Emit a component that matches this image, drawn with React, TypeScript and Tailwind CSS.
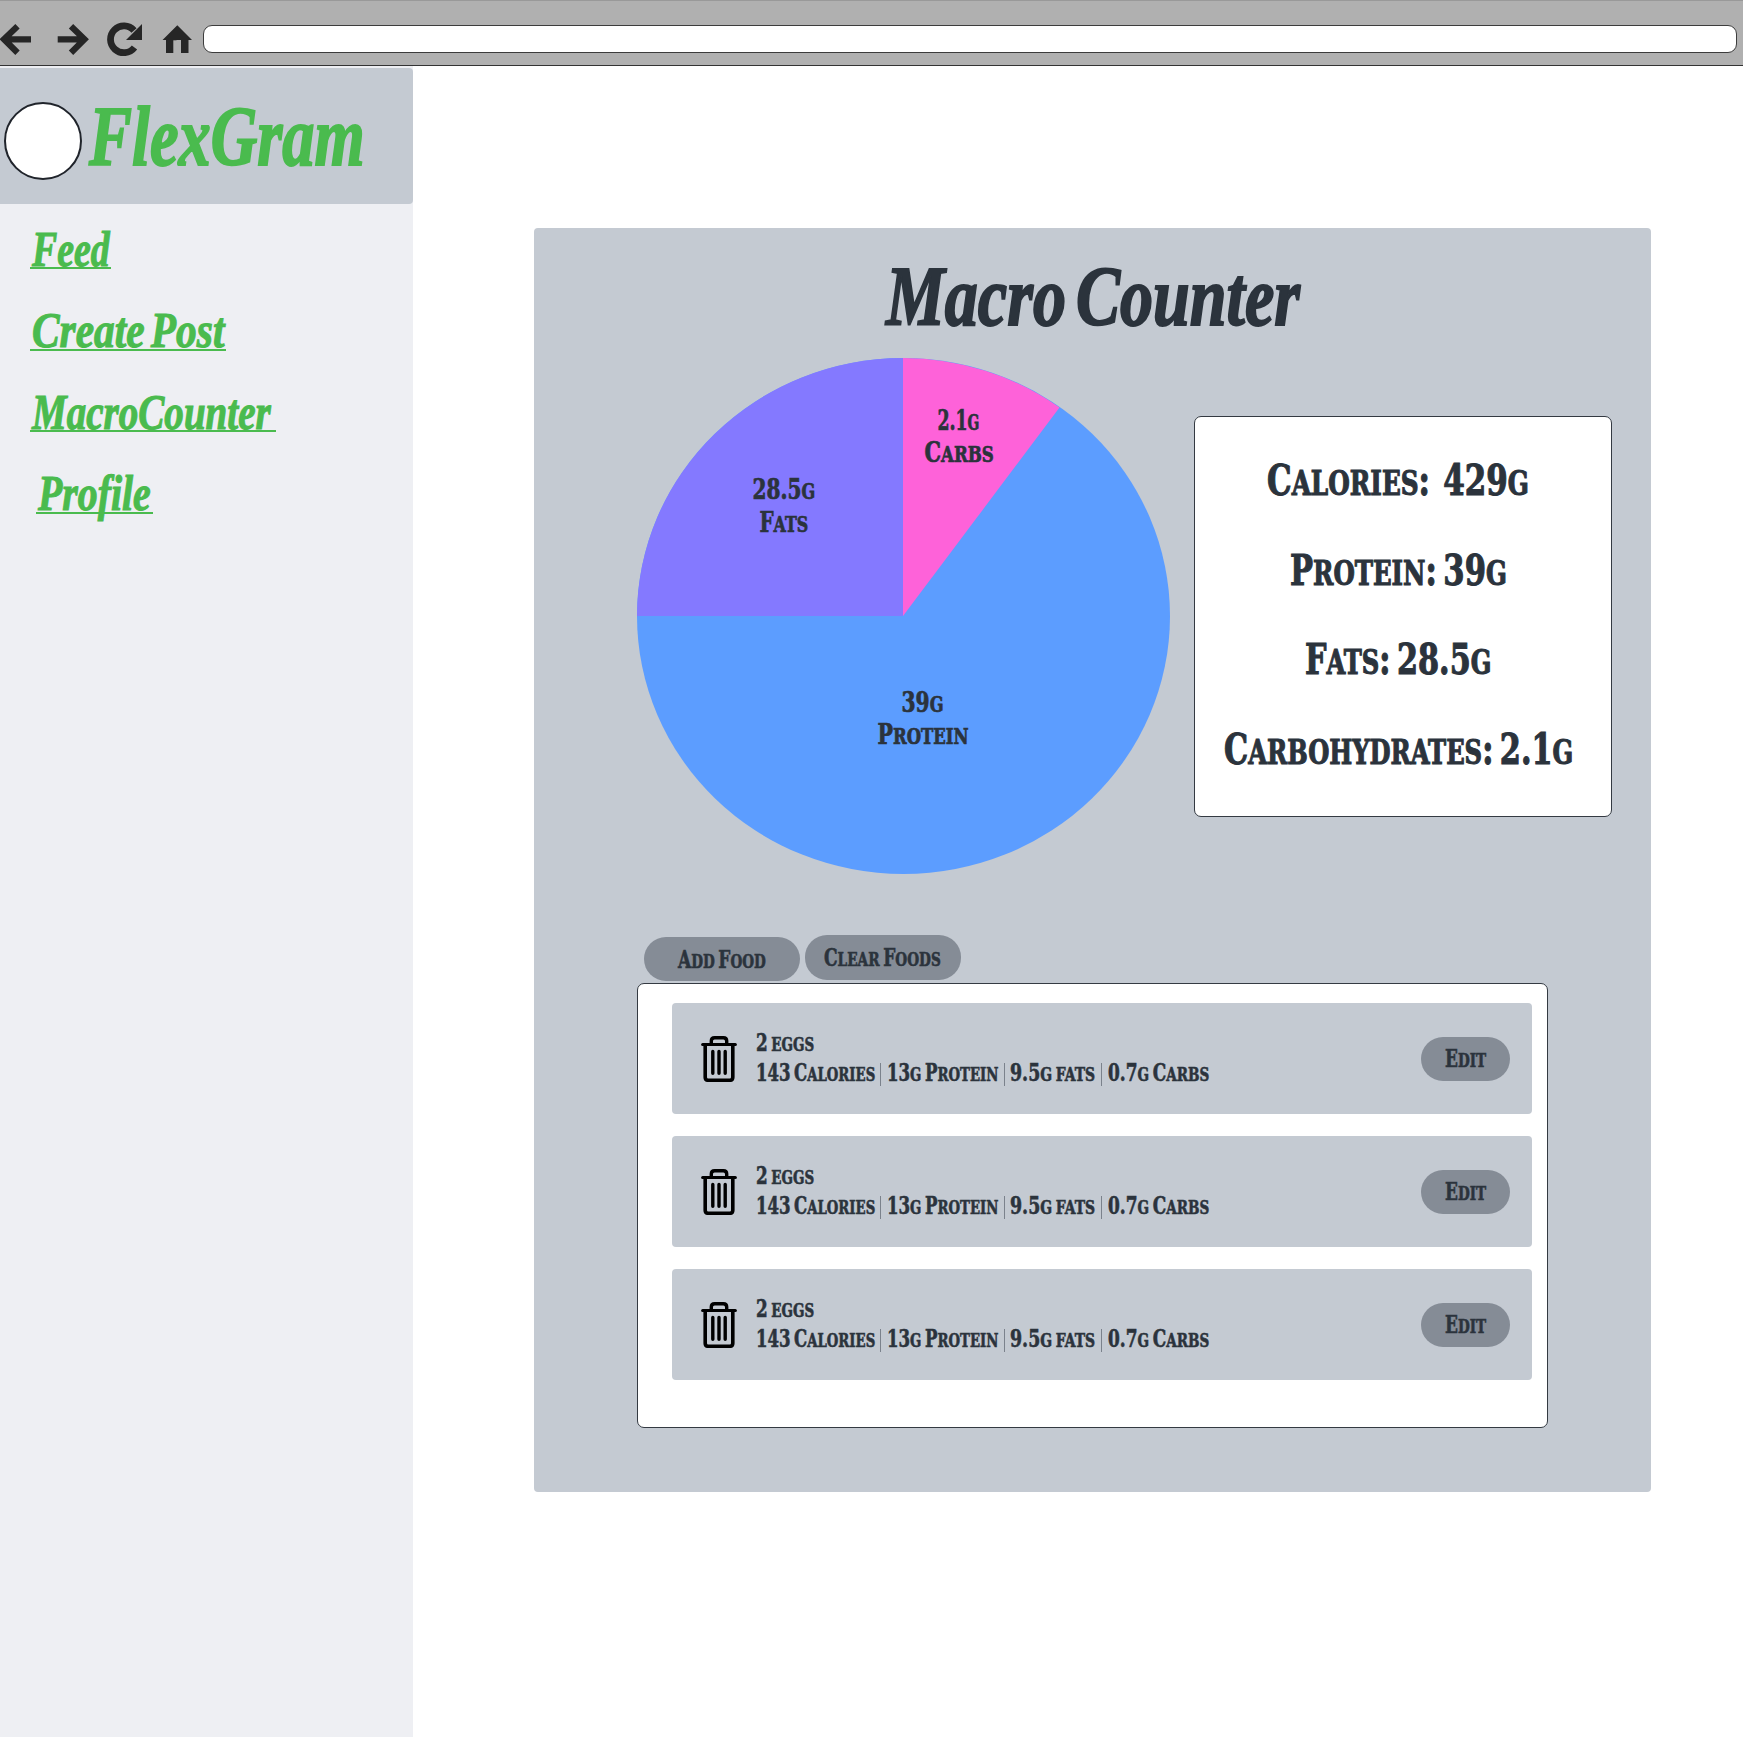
import { useLayoutEffect, useRef, useState } from "react";
import type { ReactNode } from "react";

/** One line of text, condensed or widened horizontally to a given width. */
function FitText({ width, className = "", children }: { width: number; className?: string; children: ReactNode }) {
  const ref = useRef<HTMLSpanElement>(null);
  const [scale, setScale] = useState(1);
  useLayoutEffect(() => {
    if (ref.current) setScale(width / ref.current.offsetWidth);
  }, [width, children]);
  return (
    <span className={`flex items-center justify-start whitespace-pre ${className}`} style={{ width }}>
      <span ref={ref} className="inline-block shrink-0 origin-left leading-none" style={{ transform: `scaleX(${scale})` }}>
        {children}
      </span>
    </span>
  );
}

/** Slab lettering whose lower-case letters are drawn as small capitals. */
function Slab({ text, width, className = "" }: { text: string; width: number; className?: string }) {
  const runs = text.match(/[a-z]+|[^a-z]+/g) ?? [];
  return (
    <FitText
      width={width}
      className={`font-['DejaVu_Serif_Condensed','DejaVu_Serif',serif] font-bold text-[#2b333c] [word-spacing:-0.12em] [-webkit-text-stroke:0.025em_#2b333c] ${className}`}
    >
      {runs.map((run, i) =>
        /[a-z]/.test(run) ? (
          <span key={i} className="text-[0.8em] uppercase">{run}</span>
        ) : (
          <span key={i}>{run}</span>
        ),
      )}
    </FitText>
  );
}

const script = "font-['Liberation_Serif',serif] font-bold italic [word-spacing:-0.1em]";

function BrowserBar() {
  return (
    <header className="flex h-[66px] w-full shrink-0 items-start border-t border-b border-t-[#999] border-b-[#333] bg-[#b0b0b0]">
      <svg className="mt-[21px] h-[36px] w-[203px] shrink-0" viewBox="0 22 203 36" fill="none" stroke="#262626">
        <path d="M31 39.3H4M17.5 26.3 4 39.3l13.5 13.5" strokeWidth="6.2" />
        <path d="M57.7 39.3H85M71 26.3l13.5 13-13.5 13.5" strokeWidth="6.2" />
        <path d="M134.5 47.5A13.4 13.4 0 1 1 134 30.5" strokeWidth="6.8" />
        <path d="M142 24v16h-16z" fill="#262626" stroke="none" />
        <path d="M177.3 25.3 192 40h-3.5v13H181V40h-4.5v13H166V40h-3.5z" fill="#262626" stroke="none" />
        <path d="M173.3 40.3h7.2V53h-7.2z" fill="#b0b0b0" stroke="none" />
      </svg>
      <div className="mt-[24px] mr-[6px] h-[28px] flex-1 rounded-[9px] border border-[#3c3c3c] bg-white" />
    </header>
  );
}

const links = [
  { label: "Feed", line: "w-[81px]", width: 78 },
  { label: "Create Post", line: "w-[196px]", width: 192 },
  { label: "MacroCounter", line: "w-[246px]", width: 239 },
  { label: "Profile", line: "ml-[6px] w-[117px]", width: 113 },
];

function Sidebar() {
  return (
    <aside className="flex w-[413px] shrink-0 flex-col bg-[#eeeff3] pt-[2px]">
      <div className="flex h-[136px] items-center rounded-r-[4px] bg-[#c4cad2] pl-[3.5px]">
        <div className="mt-[9px] size-[78px] rounded-full border-2 border-[#20242b] bg-white" />
        <FitText width={276} className={`${script} ml-[7px] text-[85px] text-[#4abb4e] [-webkit-text-stroke:2px_#4abb4e]`}>
          FlexGram
        </FitText>
      </div>
      <nav className="flex flex-col gap-[42.5px] pt-[26px] pl-[30px]">
        {links.map((l) => (
          <a key={l.label} className={`${l.line} flex h-[39px] items-center border-b-2 border-[#4abb4e] pl-[2px]`}>
            <FitText width={l.width} className={`${script} text-[50px] text-[#4abb4e] [-webkit-text-stroke:1.1px_#4abb4e]`}>
              {l.label}
            </FitText>
          </a>
        ))}
      </nav>
    </aside>
  );
}

function PieLabel({ amount, name, aw, nw, className }: { amount: string; name: string; aw: number; nw: number; className: string }) {
  return (
    <div className={`absolute flex -translate-x-1/2 flex-col items-center text-[28.4px] ${className}`}>
      <Slab text={amount} width={aw} className="h-[32.3px]" />
      <Slab text={name} width={nw} className="h-[32.3px]" />
    </div>
  );
}

function MacroPie() {
  return (
    <div className="relative h-[516px] w-[533px] shrink-0">
      <svg className="size-full" viewBox="0 0 533 516">
        <ellipse cx="266.5" cy="258" rx="266.5" ry="258" fill="#5c9dff" />
        <path d="M266 258H0A266.5 258 0 0 1 266 0z" fill="#8479ff" />
        <path d="M266 258V0A266.5 258 0 0 1 422.5 49.6z" fill="#fe62d9" />
      </svg>
      <PieLabel amount="2.1g" name="Carbs" aw={42} nw={69} className="top-[46.5px] left-[321.5px]" />
      <PieLabel amount="28.5g" name="Fats" aw={63} nw={49} className="top-[116px] left-[147px]" />
      <PieLabel amount="39g" name="Protein" aw={42} nw={91} className="top-[328.5px] left-[285.5px]" />
    </div>
  );
}

const totals = [
  { text: "Calories:  429g", width: 262 },
  { text: "Protein: 39g", width: 217 },
  { text: "Fats: 28.5g", width: 186 },
  { text: "Carbohydrates: 2.1g", width: 349 },
];

function Totals() {
  return (
    <div className="mt-[58px] ml-[24px] flex h-[401px] w-[418px] shrink-0 flex-col items-center rounded-[7px] border border-[#343a42] bg-white pt-[19.5px] pr-[10px]">
      {totals.map((t) => (
        <Slab key={t.text} text={t.text} width={t.width} className="h-[89.4px] text-[42.5px]" />
      ))}
    </div>
  );
}

function TrashIcon() {
  return (
    <svg className="h-[46px] w-[36px] shrink-0" viewBox="0 0 36 46" fill="none" stroke="#000" strokeLinecap="round" strokeLinejoin="round">
      <path d="M1.6 8.6h32.8" strokeWidth="3" />
      <path d="M10.3 8V5q0-3.3 3.3-3.3h8.8q3.3 0 3.3 3.3v3" strokeWidth="3.4" />
      <path d="M4.2 9v32.3q0 3 3 3h21.6q3 0 3-3V9" strokeWidth="3.6" />
      <path d="M11.8 15.5v21.7M18 15.5v21.7M24.2 15.5v21.7" strokeWidth="3.4" />
    </svg>
  );
}

function Divider() {
  return <span className="mx-[5.5px] h-[23px] w-px shrink-0 bg-[#7b828c]" />;
}

function FoodRow() {
  return (
    <li className="flex h-[111px] items-center rounded-[4px] bg-[#c4cad2] pr-[22px] pl-[28.5px] text-[23.5px]">
      <TrashIcon />
      <div className="ml-[19px] flex flex-1 flex-col pt-[1px]">
        <Slab text="2 eggs" width={58} className="h-[30px]" />
        <div className="flex h-[30px] items-center">
          <Slab text="143 Calories" width={119} />
          <Divider />
          <Slab text="13g Protein" width={111.5} />
          <Divider />
          <Slab text="9.5g fats" width={85.5} />
          <Divider />
          <Slab text="0.7g Carbs" width={101} />
        </div>
      </div>
      <button className="flex h-[44px] w-[89px] items-center justify-center rounded-[22px] bg-[#858c96] pt-[3px]">
        <Slab text="Edit" width={41} />
      </button>
    </li>
  );
}

function MacroCounter() {
  return (
    <section className="flex h-[1263.5px] w-[1117.5px] flex-col rounded-[4px] bg-[#c4cad2] pl-[103.5px]">
      <h1 className="mt-[27px] ml-[249px] h-[84px]">
        <FitText width={414} className={`${script} h-[84px] text-[84px] text-[#2b333c] [-webkit-text-stroke:2px_#2b333c]`}>
          Macro Counter
        </FitText>
      </h1>
      <div className="mt-[18.5px] flex">
        <MacroPie />
        <Totals />
      </div>
      <div className="mt-[61px] ml-[7px] flex gap-[5.5px] text-[24px]">
        <button className="mt-[2px] flex h-[44.5px] w-[155.5px] items-center justify-center rounded-[22px] bg-[#858c96] pt-[2px]">
          <Slab text="Add Food" width={88} />
        </button>
        <button className="flex h-[45px] w-[155.5px] items-center justify-center rounded-[22px] bg-[#858c96] pt-[2px]">
          <Slab text="Clear Foods" width={117} />
        </button>
      </div>
      <ul className="mt-[1.5px] flex h-[445px] w-[910.5px] flex-col gap-[22px] rounded-[7px] border border-[#343a42] bg-white pt-[19.5px] pr-[15px] pl-[34px]">
        <FoodRow />
        <FoodRow />
        <FoodRow />
      </ul>
    </section>
  );
}

export default function App() {
  return (
    <div className="flex h-[1737px] w-[1743px] flex-col overflow-hidden bg-white">
      <BrowserBar />
      <div className="flex flex-1">
        <Sidebar />
        <main className="flex-1 pt-[162px] pl-[120.5px]">
          <MacroCounter />
        </main>
      </div>
    </div>
  );
}
